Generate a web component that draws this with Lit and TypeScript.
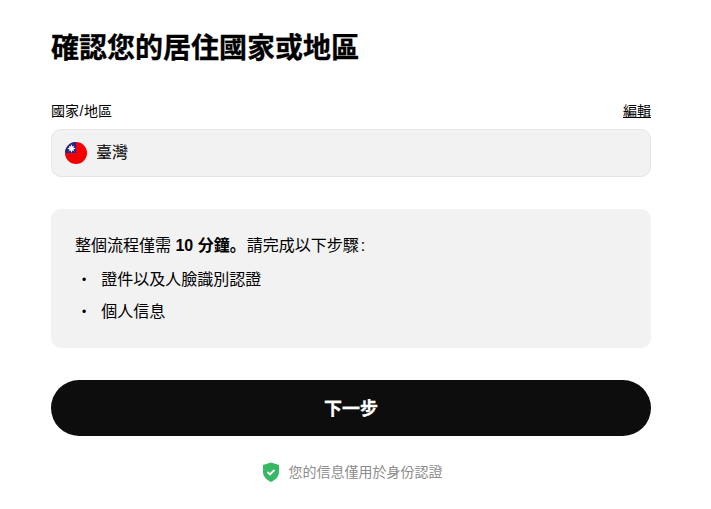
import { LitElement, html, css } from "lit";
import { customElement } from "lit/decorators.js";

@customElement("app-root")
export class AppRoot extends LitElement {
  static styles = css`
    :host { display: block; width: 711px; height: 509px; background: #fff; color: #0d0d0d; font-family: "Liberation Sans", "Noto Sans CJK JP", sans-serif; overflow: hidden; }
    .page { width: 600px; margin-left: 51px; display: flex; flex-direction: column; padding-top: 30px; }
    h1 { margin: 0; font-size: 28px; line-height: 38px; font-weight: 700; color: #000; -webkit-text-stroke: 0.3px #000; }
    .labels { display: flex; justify-content: space-between; margin-top: 33px; font-size: 14px; line-height: 20px; color: #000; }
    .labels .slash { margin: 0 0.5px; }
    .edit { text-decoration: underline; }
    .field { margin-top: 8px; height: 46px; border: 1px solid #e6e6e6; border-radius: 10px; background: #f2f2f2; display: flex; align-items: center; padding-left: 13px; gap: 9px; font-size: 16px; line-height: 24px; color: #000; }
    .box { margin-top: 32px; height: 139px; box-sizing: border-box; background: #f2f2f2; border-radius: 10px; padding: 24px; font-size: 16px; line-height: 24px; color: #000; }
    .box p { margin: 0; padding-top: 1px; }
    .box b { margin-right: 1px; }
    .colon { margin-left: 2px; }
    ul { margin: 10px 0 0; padding: 0; list-style: none; display: flex; flex-direction: column; gap: 8px; }
    li { display: flex; gap: 15px; padding-left: 7px; }
    li::before { content: "•"; font-size: 12px; }
    .next { margin-top: 32px; height: 56px; border-radius: 28px; background: #0d0d0d; color: #fff; font: inherit; font-size: 18px; line-height: 24px; font-weight: 700; border: 0; width: 100%; padding: 1px 0 0; -webkit-text-stroke: 0.25px #fff; }
    .note { margin-top: 26px; padding-left: 2px; display: flex; justify-content: center; align-items: center; gap: 9px; font-size: 14px; line-height: 20px; color: #8c8c8c; }
  `;
  render() {
    return html`<div class="page">
      <h1>確認您的居住國家或地區</h1>
      <div class="labels"><span>國家<span class="slash">/</span>地區</span><span class="edit">編輯</span></div>
      <div class="field">
        <svg width="22" height="22" viewBox="0 0 22 22"><circle cx="11" cy="11" r="11" fill="#f40000"/><path d="M0 11A11 11 0 0 1 11 0V11Z" fill="#1f2a8c"/><g transform="translate(6.5 6.5)"><path d="M0-4.2L1-1.8 3-3 1.8-1 4.2 0 1.8 1 3 3 1 1.8 0 4.2-1 1.8-3 3-1.8 1-4.2 0-1.8-1-3-3-1-1.8Z" fill="#fff"/><circle r="1.9" fill="#fff"/></g></svg>
        <span>臺灣</span>
      </div>
      <div class="box">
        <p>整個流程僅需 <b>10 分鐘。</b>請完成以下步驟<span class="colon">:</span></p>
        <ul><li>證件以及人臉識別認證</li><li>個人信息</li></ul>
      </div>
      <button class="next">下一步</button>
      <div class="note">
        <svg width="18" height="20" viewBox="0 0 18 20"><path d="M9 0.5L17 3V10C17 15 13 18 9 20C5 18 1 15 1 10V3Z" fill="#36b864"/><path d="M5.5 10L8 12.5L12.5 7.8" fill="none" stroke="#fff" stroke-width="1.9"/></svg>
        <span>您的信息僅用於身份認證</span>
      </div>
    </div>`;
  }
}
